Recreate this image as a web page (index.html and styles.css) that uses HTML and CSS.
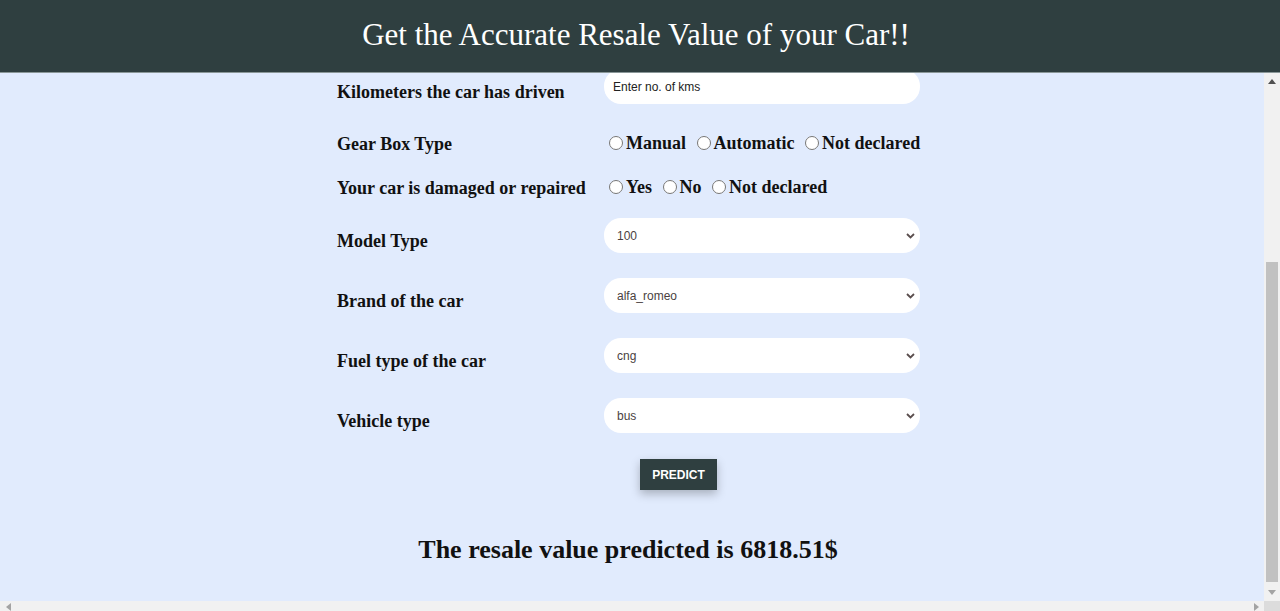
FILE: index.html
```html
<!DOCTYPE html>
<html lang="en">
<head>
<meta charset="utf-8">
<title>Car Resale Value</title>
<link rel="stylesheet" href="styles.css">
</head>
<body>
<header class="header">
  <h1 class="title">Get the Accurate Resale Value of your Car!!</h1>
</header>
<div class="main">
  <div class="viewport">
    <div class="content">
      <form class="form">
        <div class="row row-kms">
          <label class="label">Kilometers the car has driven</label>
          <input class="field" type="text" placeholder="Enter no. of kms">
        </div>
        <div class="row row-gear">
          <label class="label">Gear Box Type</label>
          <div class="radios"><input type="radio" name="gear"><span class="opt">Manual</span> <input type="radio" name="gear"><span class="opt">Automatic</span> <input type="radio" name="gear"><span class="opt">Not declared</span></div>
        </div>
        <div class="row row-dmg">
          <label class="label">Your car is damaged or repaired</label>
          <div class="radios"><input type="radio" name="dmg"><span class="opt">Yes</span> <input type="radio" name="dmg"><span class="opt">No</span> <input type="radio" name="dmg"><span class="opt">Not declared</span></div>
        </div>
        <div class="row row-sel row-first">
          <label class="label">Model Type</label>
          <span class="select-wrap"><select class="field"><option>100</option></select><svg class="chev" width="9" height="6" viewBox="0 0 9 6"><path d="M1 1 L4.5 4.5 L8 1" fill="none" stroke="#5a4e4e" stroke-width="1.8"/></svg></span>
        </div>
        <div class="row row-sel">
          <label class="label">Brand of the car</label>
          <span class="select-wrap"><select class="field"><option>alfa_romeo</option></select><svg class="chev" width="9" height="6" viewBox="0 0 9 6"><path d="M1 1 L4.5 4.5 L8 1" fill="none" stroke="#5a4e4e" stroke-width="1.8"/></svg></span>
        </div>
        <div class="row row-sel">
          <label class="label">Fuel type of the car</label>
          <span class="select-wrap"><select class="field"><option>cng</option></select><svg class="chev" width="9" height="6" viewBox="0 0 9 6"><path d="M1 1 L4.5 4.5 L8 1" fill="none" stroke="#5a4e4e" stroke-width="1.8"/></svg></span>
        </div>
        <div class="row row-sel">
          <label class="label">Vehicle type</label>
          <span class="select-wrap"><select class="field"><option>bus</option></select><svg class="chev" width="9" height="6" viewBox="0 0 9 6"><path d="M1 1 L4.5 4.5 L8 1" fill="none" stroke="#5a4e4e" stroke-width="1.8"/></svg></span>
        </div>
        <button class="predict" type="button">PREDICT</button>
        <p class="result">The resale value predicted is 6818.51$</p>
      </form>
    </div>
  </div>
  <div class="vscroll">
    <div class="arrow arrow-up"><svg width="8" height="5" viewBox="0 0 8 5"><path d="M0 5 L4 0 L8 5 Z" fill="#505050"/></svg></div>
    <div class="vtrack"><div class="vthumb"></div></div>
    <div class="arrow arrow-down"><svg width="8" height="5" viewBox="0 0 8 5"><path d="M0 0 L8 0 L4 5 Z" fill="#a3a3a3"/></svg></div>
  </div>
</div>
<div class="hscroll">
  <div class="harrow"><svg width="5" height="8" viewBox="0 0 5 8"><path d="M5 0 L5 8 L0 4 Z" fill="#a3a3a3"/></svg></div>
  <div class="htrack"></div>
  <div class="harrow"><svg width="5" height="8" viewBox="0 0 5 8"><path d="M0 0 L5 4 L0 8 Z" fill="#a3a3a3"/></svg></div>
  <div class="corner"></div>
</div>
</body>
</html>
```
FILE: styles.css
```css
html, body {
  margin: 0;
  padding: 0;
  height: 611px;
  overflow: hidden;
}
body {
  font-family: "Liberation Serif", "Times New Roman", serif;
  background: #e1ebfd;
}
.header {
  height: 73px;
  background: #2f3f40;
  border-bottom: 1px solid #8a9798;
  box-sizing: border-box;
  display: flex;
  align-items: center;
  justify-content: center;
  padding-right: 8px;
}
.title {
  margin: 0;
  color: #ffffff;
  font-weight: normal;
  font-size: 31px;
  line-height: 36px;
  padding-bottom: 3px;
}
.main {
  display: flex;
  height: 528px;
}
.viewport {
  flex: 1;
  overflow: hidden;
  background: #e1ebfd;
}
.content {
  margin-top: -4px;
}
.form {
  width: 590px;
  margin: 0 auto;
}
.row {
  display: flex;
  align-items: center;
}
.label {
  width: 267px;
  flex: none;
  font-weight: bold;
  font-size: 18px;
  line-height: 20px;
  color: #111;
  margin-top: 11px;
}
.field {
  width: 316px;
  height: 35px;
  box-sizing: border-box;
  border: none;
  border-radius: 17px;
  background: #ffffff;
  font-family: "Liberation Sans", Arial, sans-serif;
  font-size: 12px;
  color: #4a3f3f;
  outline: none;
}
input.field {
  padding: 0 9px;
}
input.field::placeholder {
  color: #222;
}
select.field {
  appearance: none;
  -webkit-appearance: none;
  padding: 0 24px 0 13px;
  display: block;
}
.select-wrap {
  position: relative;
  display: block;
  width: 316px;
  height: 35px;
}
.chev {
  position: absolute;
  right: 5px;
  top: 15px;
  pointer-events: none;
}
.row-kms {
  height: 35px;
}
.row-gear {
  height: 24px;
  margin-top: 27px;
}
.row-dmg {
  height: 24px;
  margin-top: 20px;
}
.row-sel {
  height: 35px;
  margin-top: 25px;
}
.row-sel.row-first {
  margin-top: 19px;
}
.row-gear .label, .row-dmg .label {
  margin-top: 2px;
}
.radios {
  font-weight: bold;
  font-size: 18px;
  line-height: 20px;
  color: #111;
  white-space: nowrap;
}
.radios input {
  margin: 0 3px 0 5px;
  width: 14px;
  height: 14px;
  vertical-align: -1px;
}
.radios .opt {
  margin-right: 1px;
}
.predict {
  display: block;
  margin: 26px 0 0 303px;
  width: 77px;
  height: 31px;
  border: none;
  background: #2f3f40;
  color: #ffffff;
  font-family: "Liberation Sans", Arial, sans-serif;
  font-weight: bold;
  font-size: 12px;
  box-shadow: 0 4px 10px rgba(0, 0, 0, 0.25);
  padding: 0;
}
.result {
  margin: 45px 0 0;
  padding-right: 8px;
  text-align: center;
  font-weight: bold;
  font-size: 26px;
  line-height: 30px;
  color: #111;
}
.vscroll {
  width: 16px;
  flex: none;
  background: #f1f1f1;
  display: flex;
  flex-direction: column;
}
.arrow {
  height: 17px;
  display: flex;
  align-items: center;
  justify-content: center;
}
.vtrack {
  flex: 1;
  padding: 172px 2px 0 2px;
}
.vthumb {
  height: 320px;
  background: #c1c1c1;
}
.hscroll {
  height: 10px;
  background: #f1f1f1;
  display: flex;
  overflow: hidden;
}
.harrow {
  width: 16px;
  height: 15px;
  display: flex;
  align-items: center;
  justify-content: center;
  margin-top: -2px;
}
.htrack {
  flex: 1;
}
.corner {
  width: 16px;
  background: #dcdcdc;
}
```
